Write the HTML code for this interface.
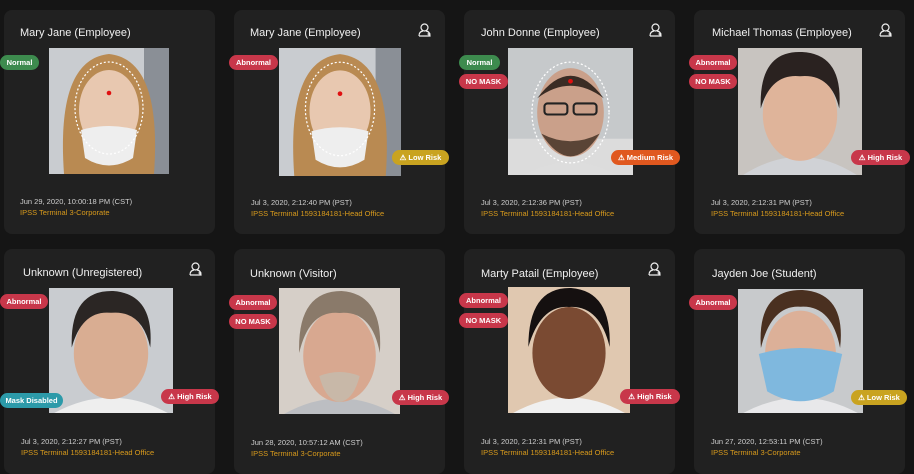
<!DOCTYPE html><html><head><style>
*{margin:0;padding:0;box-sizing:border-box}
body{width:914px;height:470px;background:#151515;position:relative;overflow:hidden;font-family:"Liberation Sans",sans-serif}
.c{position:absolute;background:#212121;border-radius:8px;width:211px;height:224px}
.t{position:absolute;color:#f0f0f0;font-size:11px;white-space:nowrap}
.d{position:absolute;color:#cfcfcf;font-size:7.5px;white-space:nowrap}
.l{position:absolute;color:#d89a1c;font-size:7.5px;white-space:nowrap}
.p{position:absolute;overflow:hidden}
.b{position:absolute;height:15px;border-radius:8px;color:#fff;font-size:7.5px;font-weight:bold;line-height:15px;text-align:center;white-space:nowrap}
.r{background:#c8374a}.g{background:#3d8b4e}.y{background:#c9a320}.o{background:#e0581f}.q{background:#2c9aa9}
.i{position:absolute;width:14px;height:14px}
</style></head><body>
<div class="c" style="left:4px;top:10px"></div>
<div class="c" style="left:234px;top:10px"></div>
<div class="c" style="left:464px;top:10px"></div>
<div class="c" style="left:694px;top:10px"></div>
<div class="c" style="left:4px;top:249px;height:225px"></div>
<div class="c" style="left:234px;top:249px;height:225px"></div>
<div class="c" style="left:464px;top:249px;height:225px"></div>
<div class="c" style="left:694px;top:249px;height:225px"></div>

<div class="t" style="left:20px;top:27px">Mary Jane (Employee)</div>
<div class="t" style="left:250px;top:27px">Mary Jane (Employee)</div>
<div class="t" style="left:481px;top:27px">John Donne (Employee)</div>
<div class="t" style="left:712px;top:27px">Michael Thomas (Employee)</div>
<div class="t" style="left:23px;top:267px">Unknown (Unregistered)</div>
<div class="t" style="left:250px;top:268px">Unknown (Visitor)</div>
<div class="t" style="left:481px;top:268px">Marty Patail (Employee)</div>
<div class="t" style="left:712px;top:268px">Jayden Joe (Student)</div>

<!-- photos -->
<svg class="p" style="left:49px;top:48px" width="120" height="126" viewBox="0 0 120 126" preserveAspectRatio="none"><rect width="120" height="126" fill="#c9ccd0"/><rect x="95" y="0" width="25" height="126" fill="#8a8f96"/><path d="M15 126 C10 55 22 10 60 6 C98 10 110 55 105 126Z" fill="#b98a52"/><ellipse cx="60" cy="62" rx="30" ry="40" fill="#e8c8b0"/><path d="M32 82 Q60 74 88 82 L84 110 Q60 125 36 110Z" fill="#eeeeee"/><circle cx="60" cy="45" r="2.3" fill="#e01010"/><ellipse cx="60" cy="60" rx="34" ry="46" fill="none" stroke="#fff" stroke-dasharray="2 2" stroke-width="1.2"/></svg>
<svg class="p" style="left:279px;top:48px" width="122" height="128" viewBox="0 0 120 126" preserveAspectRatio="none"><rect width="120" height="126" fill="#c9ccd0"/><rect x="95" y="0" width="25" height="126" fill="#8a8f96"/><path d="M15 126 C10 55 22 10 60 6 C98 10 110 55 105 126Z" fill="#b98a52"/><ellipse cx="60" cy="62" rx="30" ry="40" fill="#e8c8b0"/><path d="M32 82 Q60 74 88 82 L84 110 Q60 125 36 110Z" fill="#eeeeee"/><circle cx="60" cy="45" r="2.3" fill="#e01010"/><ellipse cx="60" cy="60" rx="34" ry="46" fill="none" stroke="#fff" stroke-dasharray="2 2" stroke-width="1.2"/></svg>
<svg class="p" style="left:508px;top:48px" width="125" height="127" viewBox="0 0 120 126" preserveAspectRatio="none"><rect width="120" height="126" fill="#c6c9cb"/><rect x="0" y="90" width="120" height="36" fill="#dcdcdc"/><path d="M15 126 Q60 100 105 126Z" fill="#ddd"/><ellipse cx="60" cy="64" rx="32" ry="44" fill="#caa08a"/><path d="M28 50 Q60 5 92 50 Q60 25 28 50Z" fill="#3a2c24"/><path d="M32 85 Q60 130 88 85 Q60 100 32 85Z" fill="#5a4436"/><rect x="35" y="55" width="22" height="11" rx="3" fill="none" stroke="#222" stroke-width="2"/><rect x="63" y="55" width="22" height="11" rx="3" fill="none" stroke="#222" stroke-width="2"/><circle cx="60" cy="33" r="2.3" fill="#e01010"/><ellipse cx="60" cy="64" rx="37" ry="50" fill="none" stroke="#fff" stroke-dasharray="2 2" stroke-width="1.2"/></svg>
<svg class="p" style="left:738px;top:48px" width="124" height="127" viewBox="0 0 120 126" preserveAspectRatio="none"><rect width="120" height="126" fill="#c8c4c0"/><path d="M5 126 Q60 90 115 126Z" fill="#d0d2d6"/><ellipse cx="60" cy="66" rx="36" ry="46" fill="#dfb49a"/><path d="M22 60 Q20 2 62 4 Q102 6 98 60 Q90 25 60 28 Q32 25 22 60Z" fill="#2a2220"/></svg>
<svg class="p" style="left:49px;top:288px" width="124" height="125" viewBox="0 0 120 126" preserveAspectRatio="none"><rect width="120" height="126" fill="#c9ccd0"/><path d="M5 126 Q60 95 115 126Z" fill="#eeeeee"/><ellipse cx="60" cy="66" rx="36" ry="46" fill="#d9ad92"/><path d="M22 60 Q20 2 62 3 Q102 6 98 60 Q90 22 60 25 Q32 22 22 60Z" fill="#2b2624"/></svg>
<svg class="p" style="left:279px;top:288px" width="121" height="126" viewBox="0 0 120 126" preserveAspectRatio="none"><rect width="120" height="126" fill="#d6cfc8"/><path d="M5 126 Q60 95 115 126Z" fill="#bcbec2"/><ellipse cx="60" cy="68" rx="36" ry="46" fill="#d8a890"/><path d="M20 65 Q18 3 62 3 Q104 6 100 65 Q92 22 60 25 Q30 22 20 65Z" fill="#8a7a6a"/><path d="M40 88 Q60 80 80 88 Q74 112 60 114 Q46 112 40 88Z" fill="#c8b8a8"/></svg>
<svg class="p" style="left:508px;top:287px" width="122" height="126" viewBox="0 0 120 126" preserveAspectRatio="none"><rect width="120" height="126" fill="#e0c8b0"/><path d="M5 126 Q60 95 115 126Z" fill="#f0f0f0"/><ellipse cx="60" cy="66" rx="36" ry="46" fill="#7a4a32"/><path d="M20 60 Q20 0 62 1 Q102 4 100 60 Q90 18 60 20 Q32 18 20 60Z" fill="#151010"/></svg>
<svg class="p" style="left:738px;top:289px" width="125" height="124" viewBox="0 0 120 126" preserveAspectRatio="none"><rect width="120" height="126" fill="#c8cacc"/><path d="M5 126 Q60 95 115 126Z" fill="#e8e8ea"/><ellipse cx="60" cy="66" rx="34" ry="44" fill="#dcb098"/><path d="M22 60 Q18 0 62 1 Q104 4 98 60 Q90 16 60 18 Q32 16 22 60Z" fill="#4a3020"/><path d="M20 66 Q60 54 100 66 L92 104 Q60 124 28 104Z" fill="#7fb8de"/></svg>

<!-- badges -->
<div class="b g" style="left:0;top:55px;width:39px">Normal</div>
<div class="b r" style="left:229px;top:55px;width:49px">Abnormal</div>
<div class="b y" style="left:392px;top:150px;width:57px">⚠ Low Risk</div>
<div class="b g" style="left:459px;top:55px;width:41px">Normal</div>
<div class="b r" style="left:459px;top:74px;width:49px">NO MASK</div>
<div class="b o" style="left:611px;top:150px;width:69px">⚠ Medium Risk</div>
<div class="b r" style="left:689px;top:55px;width:48px">Abnormal</div>
<div class="b r" style="left:689px;top:74px;width:48px">NO MASK</div>
<div class="b r" style="left:851px;top:150px;width:59px">⚠ High Risk</div>
<div class="b r" style="left:0;top:294px;width:48px">Abnormal</div>
<div class="b q" style="left:0;top:393px;width:63px">Mask Disabled</div>
<div class="b r" style="left:161px;top:389px;width:58px">⚠ High Risk</div>
<div class="b r" style="left:229px;top:295px;width:48px">Abnormal</div>
<div class="b r" style="left:229px;top:314px;width:48px">NO MASK</div>
<div class="b r" style="left:392px;top:390px;width:57px">⚠ High Risk</div>
<div class="b r" style="left:459px;top:293px;width:49px">Abnormal</div>
<div class="b r" style="left:459px;top:313px;width:49px">NO MASK</div>
<div class="b r" style="left:620px;top:389px;width:60px">⚠ High Risk</div>
<div class="b r" style="left:689px;top:295px;width:48px">Abnormal</div>
<div class="b y" style="left:851px;top:390px;width:56px">⚠ Low Risk</div>

<!-- text -->
<div class="d" style="left:20px;top:197px">Jun 29, 2020, 10:00:18 PM (CST)</div>
<div class="l" style="left:20px;top:208px">IPSS Terminal 3-Corporate</div>
<div class="d" style="left:251px;top:198px">Jul 3, 2020, 2:12:40 PM (PST)</div>
<div class="l" style="left:251px;top:209px">IPSS Terminal 1593184181-Head Office</div>
<div class="d" style="left:481px;top:198px">Jul 3, 2020, 2:12:36 PM (PST)</div>
<div class="l" style="left:481px;top:209px">IPSS Terminal 1593184181-Head Office</div>
<div class="d" style="left:711px;top:198px">Jul 3, 2020, 2:12:31 PM (PST)</div>
<div class="l" style="left:711px;top:209px">IPSS Terminal 1593184181-Head Office</div>
<div class="d" style="left:21px;top:437px">Jul 3, 2020, 2:12:27 PM (PST)</div>
<div class="l" style="left:21px;top:448px">IPSS Terminal 1593184181-Head Office</div>
<div class="d" style="left:251px;top:438px">Jun 28, 2020, 10:57:12 AM (CST)</div>
<div class="l" style="left:251px;top:449px">IPSS Terminal 3-Corporate</div>
<div class="d" style="left:481px;top:437px">Jul 3, 2020, 2:12:31 PM (PST)</div>
<div class="l" style="left:481px;top:448px">IPSS Terminal 1593184181-Head Office</div>
<div class="d" style="left:711px;top:437px">Jun 27, 2020, 12:53:11 PM (CST)</div>
<div class="l" style="left:711px;top:448px">IPSS Terminal 3-Corporate</div>

<!-- icons -->
<svg class="i" style="left:418px;top:23px" viewBox="0 0 14 14"><g fill="none" stroke="#eee" stroke-width="1.2"><circle cx="6.5" cy="4.5" r="3.5"/><path d="M1 13 Q1 8.5 5 8 M8 8 Q12 8.5 12 13 L1 13"/><path d="M11 9.5 v3 M9.5 11 h3"/></g></svg>
<svg class="i" style="left:649px;top:23px" viewBox="0 0 14 14"><g fill="none" stroke="#eee" stroke-width="1.2"><circle cx="6.5" cy="4.5" r="3.5"/><path d="M1 13 Q1 8.5 5 8 M8 8 Q12 8.5 12 13 L1 13"/><path d="M11 9.5 v3 M9.5 11 h3"/></g></svg>
<svg class="i" style="left:879px;top:23px" viewBox="0 0 14 14"><g fill="none" stroke="#eee" stroke-width="1.2"><circle cx="6.5" cy="4.5" r="3.5"/><path d="M1 13 Q1 8.5 5 8 M8 8 Q12 8.5 12 13 L1 13"/><path d="M11 9.5 v3 M9.5 11 h3"/></g></svg>
<svg class="i" style="left:189px;top:262px" viewBox="0 0 14 14"><g fill="none" stroke="#eee" stroke-width="1.2"><circle cx="6.5" cy="4.5" r="3.5"/><path d="M1 13 Q1 8.5 5 8 M8 8 Q12 8.5 12 13 L1 13"/><path d="M11 9.5 v3 M9.5 11 h3"/></g></svg>
<svg class="i" style="left:648px;top:262px" viewBox="0 0 14 14"><g fill="none" stroke="#eee" stroke-width="1.2"><circle cx="6.5" cy="4.5" r="3.5"/><path d="M1 13 Q1 8.5 5 8 M8 8 Q12 8.5 12 13 L1 13"/><path d="M11 9.5 v3 M9.5 11 h3"/></g></svg>
</body></html>
